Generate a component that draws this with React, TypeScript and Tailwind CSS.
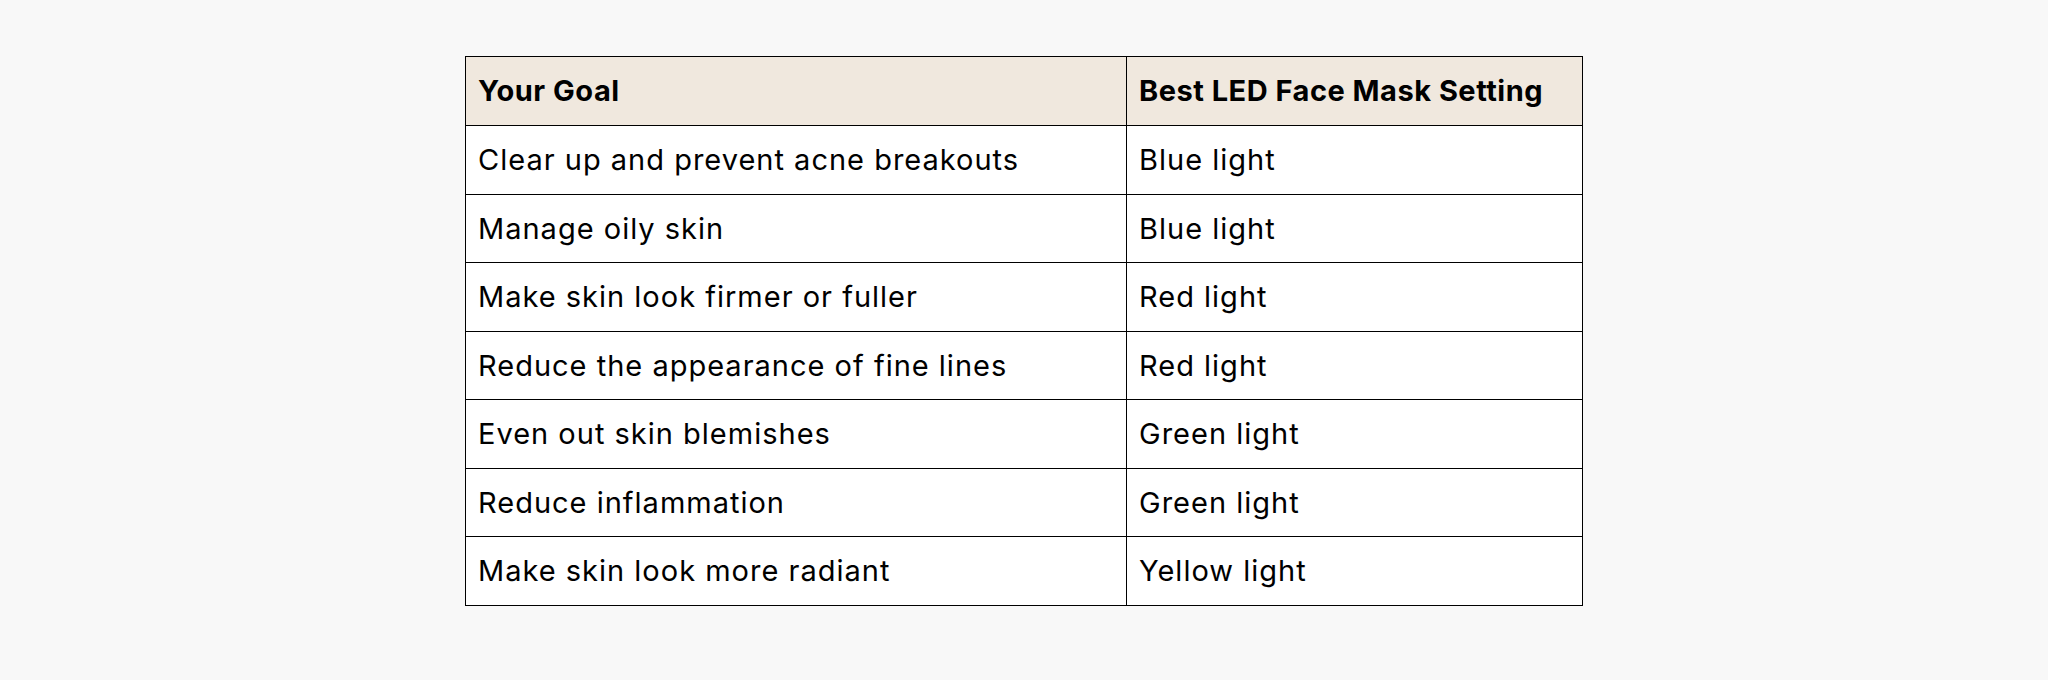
const rows: [string, string][] = [
  ['Clear up and prevent acne breakouts', 'Blue light'],
  ['Manage oily skin', 'Blue light'],
  ['Make skin look firmer or fuller', 'Red light'],
  ['Reduce the appearance of fine lines', 'Red light'],
  ['Even out skin blemishes', 'Green light'],
  ['Reduce inflammation', 'Green light'],
  ['Make skin look more radiant', 'Yellow light'],
];

export default function App() {
  return (
    <div className="w-full h-[680px] bg-[#f8f8f8] pt-[56px] pl-[465px] font-['Inter',sans-serif] text-black">
      <table className="border-collapse w-[1118px] text-[29px] tracking-[1px]">
        <thead>
          <tr className="h-[69px] bg-[#f0e8de]">
            <th className="w-[661px] border border-black text-left font-bold tracking-[0.5px] px-[12px]">Your Goal</th>
            <th className="border border-black text-left font-bold tracking-[0.5px] px-[12px]">Best LED Face Mask Setting</th>
          </tr>
        </thead>
        <tbody>
          {rows.map(([goal, setting]) => (
            <tr key={goal} className="h-[68.5px] bg-white">
              <td className="border border-black px-[12px]">{goal}</td>
              <td className="border border-black px-[12px]">{setting}</td>
            </tr>
          ))}
        </tbody>
      </table>
    </div>
  );
}
